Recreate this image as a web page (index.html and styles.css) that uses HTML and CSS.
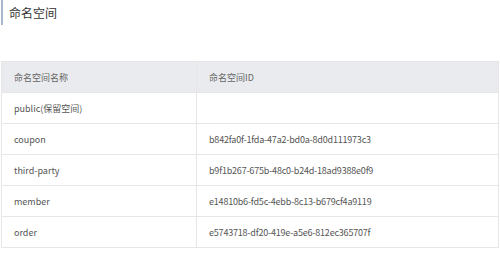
FILE: index.html
```html
<!DOCTYPE html>
<html lang="zh-CN">
<head>
<meta charset="utf-8">
<title>命名空间</title>
<link rel="stylesheet" href="styles.css">
</head>
<body>
<div class="page">
  <h1 class="title">命名空间</h1>
  <table class="ns-table">
    <thead>
      <tr><th class="col-name">命名空间名称</th><th>命名空间ID</th></tr>
    </thead>
    <tbody>
      <tr><td>public(保留空间)</td><td></td></tr>
      <tr><td>coupon</td><td class="id">b842fa0f-1fda-47a2-bd0a-8d0d111973c3</td></tr>
      <tr><td>third-party</td><td class="id">b9f1b267-675b-48c0-b24d-18ad9388e0f9</td></tr>
      <tr><td>member</td><td class="id">e14810b6-fd5c-4ebb-8c13-b679cf4a9119</td></tr>
      <tr><td>order</td><td class="id">e5743718-df20-419e-a5e6-812ec365707f</td></tr>
    </tbody>
  </table>
</div>
</body>
</html>
```
FILE: styles.css
```css
html, body {
  margin: 0;
  padding: 0;
  background: #fff;
}
.page {
  padding: 0 1px 0 1px;
  font-family: "Noto Sans CJK SC", "DejaVu Sans", sans-serif;
}
.title {
  margin: 0;
  height: 25px;
  line-height: 25px;
  font-size: 12px;
  font-weight: normal;
  color: #333;
  border-left: 2px solid #a7b8ca;
  padding-left: 6px;
}
.ns-table {
  margin-top: 36px;
  width: 498px;
  border-collapse: collapse;
  table-layout: fixed;
  font-size: 9px;
  color: #555;
}
.ns-table th, .ns-table td {
  border: 1px solid #e6e6e6;
  height: 31px;
  padding: 0 0 0 12px;
  text-align: left;
  font-weight: normal;
  box-sizing: border-box;
}
.ns-table th {
  background: #eaebee;
  color: #666;
}
.ns-table td.id {
  letter-spacing: -0.2px;
}
.col-name {
  width: 195px;
}
```
